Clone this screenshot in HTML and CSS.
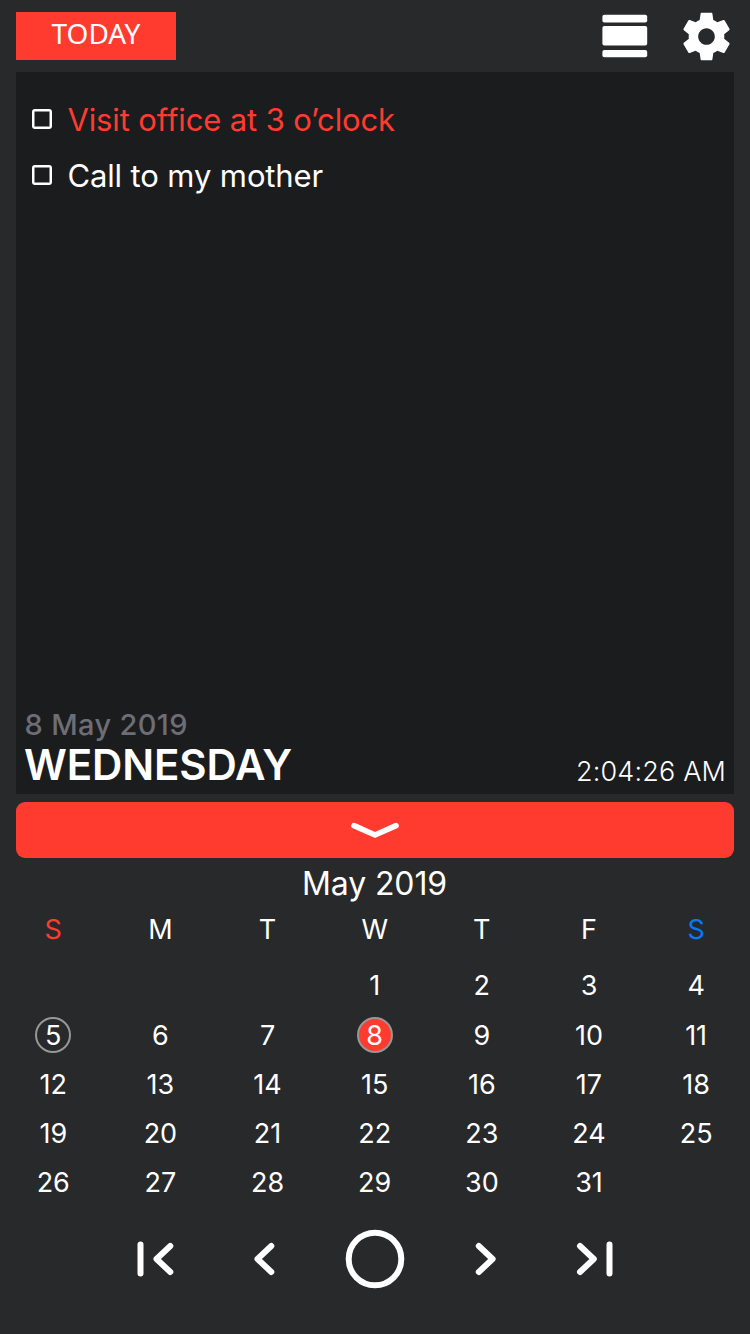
FILE: index.html
```html
<!DOCTYPE html>
<html lang="en">
<head>
<meta charset="utf-8">
<title>Calendar</title>
<link rel="stylesheet" href="styles.css">
</head>
<body>
<header class="topbar">
  <button class="today"><span>TODAY</span></button>
  <div class="tools">
    <svg class="icon-list" viewBox="0 0 46 44"><rect x="0.4" y="0.8" width="44.8" height="7.6" rx="2"/><rect x="0.4" y="12" width="44.8" height="19.6" rx="2"/><rect x="0.4" y="36" width="44.8" height="7.2" rx="2"/></svg>
    <svg class="icon-gear" viewBox="0 0 24 24"><path d="M19.43 12.98c.04-.32.07-.64.07-.98s-.03-.66-.07-.98l2.11-1.65c.19-.15.24-.42.12-.64l-2-3.46c-.12-.22-.39-.3-.61-.22l-2.49 1c-.52-.4-1.08-.73-1.69-.98l-.38-2.65C14.46 2.18 14.25 2 14 2h-4c-.25 0-.46.18-.49.42l-.38 2.65c-.61.25-1.17.59-1.69.98l-2.49-1c-.23-.09-.49 0-.61.22l-2 3.46c-.13.22-.07.49.12.64l2.11 1.65c-.04.32-.07.65-.07.98s.03.66.07.98l-2.11 1.65c-.19.15-.24.42-.12.64l2 3.46c.12.22.39.3.61.22l2.49-1c.52.4 1.08.73 1.69.98l.38 2.65c.03.24.24.42.49.42h4c.25 0 .46-.18.49-.42l.38-2.65c.61-.25 1.17-.59 1.69-.98l2.49 1c.23.09.49 0 .61-.22l2-3.46c.12-.22.07-.49-.12-.64l-2.11-1.65zM12 15.5c-1.93 0-3.5-1.57-3.5-3.5s1.57-3.5 3.5-3.5 3.5 1.57 3.5 3.5-1.57 3.5-3.5 3.5z"/></svg>
  </div>
</header>
<main class="panel">
  <ul class="tasks">
    <li class="task"><span class="box"></span><span class="label urgent">Visit office at 3 o’clock</span></li>
    <li class="task"><span class="box"></span><span class="label">Call to my mother</span></li>
  </ul>
  <div class="stamp">
    <div>
      <div class="date">8 May 2019</div>
      <div class="weekday">WEDNESDAY</div>
    </div>
    <div class="time">2:04:26 AM</div>
  </div>
</main>
<button class="collapse"><svg class="icon-down" viewBox="0 0 50 18"><path d="M4 4.6 25 14 46 4.6"/></svg></button>
<section class="calendar">
  <h1 class="month"><span>May 2019</span></h1>
  <div class="week names"><span class="sun">S</span><span>M</span><span>T</span><span>W</span><span>T</span><span>F</span><span class="sat">S</span></div>
  <div class="week"><span></span><span></span><span></span><span>1</span><span>2</span><span>3</span><span>4</span></div>
  <div class="week"><span><b class="ring">5</b></span><span>6</span><span>7</span><span><b class="ring selected">8</b></span><span>9</span><span>10</span><span>11</span></div>
  <div class="week"><span>12</span><span>13</span><span>14</span><span>15</span><span>16</span><span>17</span><span>18</span></div>
  <div class="week"><span>19</span><span>20</span><span>21</span><span>22</span><span>23</span><span>24</span><span>25</span></div>
  <div class="week"><span>26</span><span>27</span><span>28</span><span>29</span><span>30</span><span>31</span><span></span></div>
</section>
<nav class="pager">
  <svg viewBox="0 0 60 60"><path d="M15.5 15.5v29M45.3 17 31.5 30l13.8 13"/></svg>
  <svg viewBox="0 0 60 60"><path d="M36.3 17 22.5 30l13.8 13"/></svg>
  <svg viewBox="0 0 60 60"><circle cx="30" cy="30" r="26.3"/></svg>
  <svg viewBox="0 0 60 60"><path d="M23.8 17 37.6 30 23.8 43"/></svg>
  <svg viewBox="0 0 60 60"><path d="M15 17 28.8 30 15 43M44.5 15.5v29"/></svg>
</nav>
</body>
</html>
```
FILE: styles.css
```css
* { box-sizing: border-box; }
body {
  margin: 0;
  width: 750px;
  height: 1334px;
  overflow: hidden;
  display: flex;
  flex-direction: column;
  background: #28292b;
  color: #fff;
  font-family: Inter, "Liberation Sans", sans-serif;
}
button { border: 0; padding: 0; background: #ff3b30; color: #fff; display: flex; align-items: center; justify-content: center; }
svg { display: block; fill: #fff; }

.topbar { height: 72px; padding: 0 16px; display: flex; align-items: center; justify-content: space-between; }
.today { width: 160px; height: 48px; font: 28px/42px "Noto Sans", "Open Sans", sans-serif; font-weight: 400; padding-bottom: 6px; }
.tools { display: flex; align-items: center; gap: 29.5px; }
.icon-list { width: 46px; height: 44px; }
.icon-gear { width: 57px; height: 57px; margin-right: -0.5px; }

.panel { height: 722px; margin: 0 16px; background: #1b1c1e; display: flex; flex-direction: column; justify-content: space-between; }
.tasks { list-style: none; margin: 0; padding: 20px 16px 0; }
.task { height: 56px; display: flex; align-items: center; gap: 15.4px; font-size: 31px; line-height: 40px; letter-spacing: -0.12px; white-space: nowrap; }
.box { width: 20px; height: 20px; margin-bottom: 2px; border: 2px solid #fff; border-radius: 3px; box-shadow: inset 0 0 0 0.5px #fff; }
.urgent { color: #ff3b30; }
.stamp { display: flex; justify-content: space-between; align-items: flex-end; padding: 0 8px 7px; }
.date { padding-left: 0.6px; font-size: 29px; line-height: 35px; font-weight: 450; letter-spacing: 0.35px; color: #6d6d75; }
.weekday { font-size: 42px; line-height: 45px; font-weight: 600; letter-spacing: -0.12px; }
.time { margin-bottom: -1px; font-size: 27px; line-height: 32px; font-weight: 300; letter-spacing: 0.17px; }

.collapse { height: 56px; margin: 8px 16px 0; border-radius: 9px; }
.icon-down { width: 50px; height: 18px; }
.icon-down path { fill: none; stroke: #fff; stroke-width: 5.6; stroke-linecap: round; stroke-linejoin: round; }

.month { margin: 0; height: 51px; padding-right: 1px; font-size: 32px; line-height: 51px; font-weight: 400; letter-spacing: -0.1px; text-align: center; }
.week { height: 49.2px; display: grid; grid-template-columns: repeat(7, 1fr); font-size: 27px; line-height: 49.2px; text-align: center; }
.week > span { display: flex; justify-content: center; align-items: center; padding: 0.4px 0.6px 0 0; }
.names { height: 52px; line-height: 40px; }
.names > span { height: 41px; }
.sun { color: #ff3b30; }
.sat { color: #007aff; }
.ring { width: 36px; height: 36px; margin-top: -0.6px; border: 2px solid #979797; border-radius: 50%; font-weight: 400; line-height: 34px; }
.selected { background: #ff3b30; }

.pager { height: 60px; margin: 22px 100px 0; display: grid; grid-template-columns: repeat(5, 1fr); justify-items: center; }
.pager svg { width: 60px; height: 60px; fill: none; stroke: #fff; stroke-width: 6; stroke-linecap: round; stroke-linejoin: round; }
```
